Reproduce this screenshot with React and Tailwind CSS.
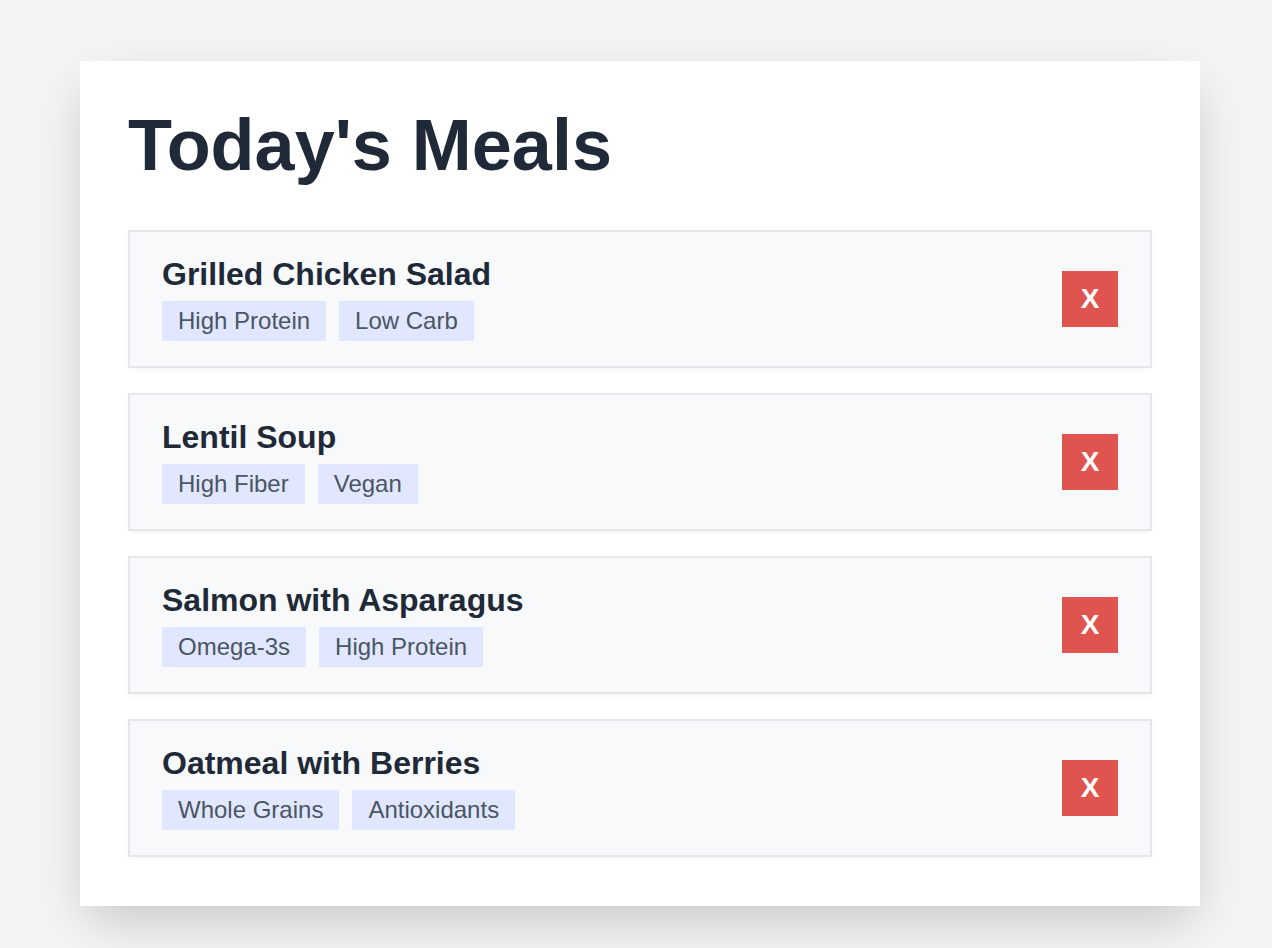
const meals = [
  { name: 'Grilled Chicken Salad', tags: ['High Protein', 'Low Carb'] },
  { name: 'Lentil Soup', tags: ['High Fiber', 'Vegan'] },
  { name: 'Salmon with Asparagus', tags: ['Omega-3s', 'High Protein'] },
  { name: 'Oatmeal with Berries', tags: ['Whole Grains', 'Antioxidants'] },
];

const MealItem = ({ meal }) => {
  return (
    <div className="flex items-center justify-between border-2 border-[#e5e7eb] bg-[#f8f9fb] px-8 pt-6 pb-[25px] shadow-[0_2px_4px_rgba(0,0,0,0.04)]">
      <div>
        <h2 className="text-[32px] font-bold leading-9 text-[#1f2937]">{meal.name}</h2>
        <div className="mt-[9px] flex gap-[13px]">
          {meal.tags.map((tag) => (
            <span key={tag} className="bg-[#e0e7ff] px-4 py-1 text-2xl leading-8 text-[#4b5563]">
              {tag}
            </span>
          ))}
        </div>
      </div>
      <button className="flex h-14 w-14 items-center justify-center bg-[#e0544f] text-[28px] font-bold text-white">
        X
      </button>
    </div>
  );
};

export default function App() {
  return (
    <div className="min-h-screen bg-[#f3f4f6] pt-[61px] font-['Liberation_Sans',Arial,sans-serif]">
      <div className="ml-[80px] w-[1120px] bg-white px-12 pt-12 pb-[49px] shadow-[0_20px_50px_-8px_rgba(0,0,0,0.2)]">
        <h1 className="mb-[49px] text-7xl font-bold leading-none text-[#1f2937]">Today's Meals</h1>
        <div className="flex flex-col gap-[25px]">
          {meals.map((meal) => (
            <MealItem key={meal.name} meal={meal} />
          ))}
        </div>
      </div>
    </div>
  );
}
